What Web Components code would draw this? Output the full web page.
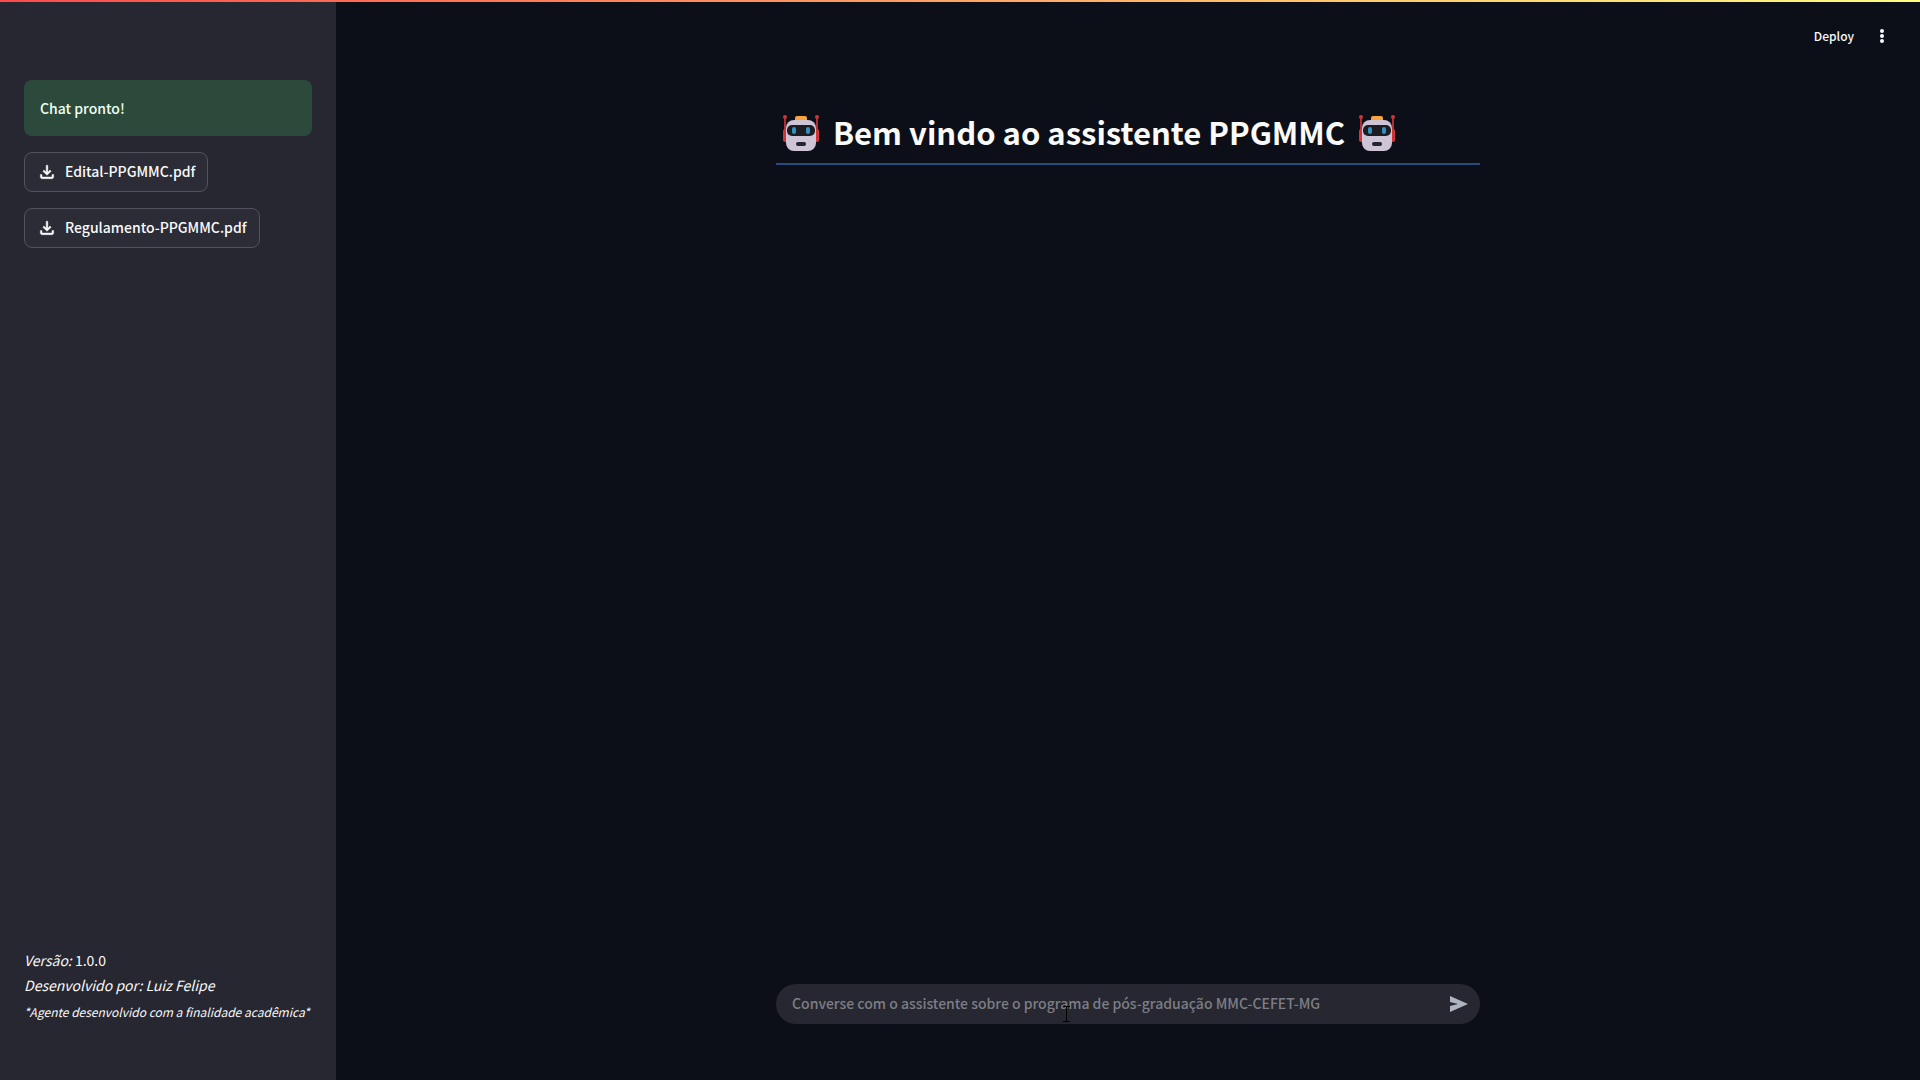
<!DOCTYPE html>
<html lang="pt-BR">
<head>
<meta charset="utf-8">
<title>Assistente PPGMMC</title>
<style>
    body {
        margin: 0;
        background: #0c0f17;
        color: #fafafa;
        font-family: "Noto Sans CJK JP", "Noto Sans", sans-serif;
        font-size: 14px;
        font-weight: 500;
        line-height: 24px;
    }
</style>
</head>
<body>
<chat-app>
    <app-sidebar slot="sidebar">
        <status-alert>Chat pronto!</status-alert>
        <download-button>Edital-PPGMMC.pdf</download-button>
        <download-button>Regulamento-PPGMMC.pdf</download-button>
        <version-info slot="footer" version="1.0.0" author="Luiz Felipe"></version-info>
    </app-sidebar>
    <app-toolbar></app-toolbar>
    <page-title>Bem vindo ao assistente PPGMMC</page-title>
    <chat-input slot="bottom" placeholder="Converse com o assistente sobre o programa de pós-graduação MMC-CEFET-MG"></chat-input>
</chat-app>

<script>
// Attach an open shadow root filled from a template
function render(host, html) {
    const template = document.createElement('template');
    template.innerHTML = html;
    host.attachShadow({ mode: 'open' });
    host.shadowRoot.appendChild(template.content.cloneNode(true));
}

class ChatApp extends HTMLElement {
    constructor() {
        super();
        render(this, `
            <style>
                :host {
                    display: grid;
                    grid-template-columns: 336px 1fr;
                    min-height: 100vh;
                    position: relative;
                }

                .decoration {
                    position: absolute;
                    top: 0;
                    left: 0;
                    right: 0;
                    height: 2px;
                    background: linear-gradient(90deg, #ff4b4b, #fffd80);
                }

                main {
                    display: flex;
                    flex-direction: column;
                }

                .bottom {
                    margin-top: auto;
                    padding: 0 16px 56px;
                }
            </style>
            <slot name="sidebar"></slot>
            <main>
                <slot></slot>
                <div class="bottom"><slot name="bottom"></slot></div>
            </main>
            <div class="decoration"></div>
        `);
    }
}

class AppSidebar extends HTMLElement {
    constructor() {
        super();
        render(this, `
            <style>
                :host {
                    display: flex;
                    flex-direction: column;
                    box-sizing: border-box;
                    padding: 80px 24px 56px;
                    background: #262730;
                }

                .content {
                    display: flex;
                    flex-direction: column;
                    align-items: flex-start;
                    gap: 16px;
                }

                footer {
                    margin-top: auto;
                }
            </style>
            <div class="content"><slot></slot></div>
            <footer><slot name="footer"></slot></footer>
        `);
    }
}

class StatusAlert extends HTMLElement {
    constructor() {
        super();
        render(this, `
            <style>
                :host {
                    display: block;
                    align-self: stretch;
                    padding: 16px;
                    border-radius: 8px;
                    background: #2c4a3c;
                    color: #f0fff0;
                }
            </style>
            <div role="alert"><slot></slot></div>
        `);
    }
}

class DownloadButton extends HTMLElement {
    constructor() {
        super();
        render(this, `
            <style>
                :host {
                    display: block;
                }

                button {
                    display: flex;
                    align-items: center;
                    gap: 8px;
                    height: 40px;
                    padding: 0 12px;
                    border: 1px solid #51525c;
                    border-radius: 8px;
                    background: #2b2c36;
                    color: inherit;
                    font: inherit;
                    cursor: pointer;
                }

                svg {
                    width: 20px;
                    height: 20px;
                    fill: currentColor;
                }

                span {
                    padding-bottom: 2px;
                }
            </style>
            <button type="button">
                <svg viewBox="0 0 24 24" aria-hidden="true"><path d="M12 16l-5-5 1.4-1.45L11 12.15V4h2v8.150l2.6-2.6L17 11zM6 20q-.82 0-1.41-.59Q4 18.820 4 18v-3h2v3h12v-3h2v3q0 .82-.59 1.410Q18.820 20 18 20z" stroke="currentColor" stroke-width=".5"/></svg>
                <span><slot></slot></span>
            </button>
        `);
    }
}

class VersionInfo extends HTMLElement {
    constructor() {
        super();
        render(this, `
            <style>
                :host {
                    display: block;
                    font-weight: 400;
                    line-height: 25px;
                }

                p {
                    margin: 0;
                }

                small {
                    display: block;
                    padding-top: 2px;
                    font-size: 12px;
                    font-style: italic;
                    line-height: 24px;
                    white-space: nowrap;
                }
            </style>
            <p><em>Versão:</em> <span class="version"></span></p>
            <p><em>Desenvolvido por: <span class="author"></span></em></p>
            <small>*Agente desenvolvido com a finalidade acadêmica*</small>
        `);
    }

    connectedCallback() {
        this.shadowRoot.querySelector('.version').textContent = this.getAttribute('version');
        this.shadowRoot.querySelector('.author').textContent = this.getAttribute('author');
    }
}

class AppToolbar extends HTMLElement {
    constructor() {
        super();
        render(this, `
            <style>
                :host {
                    display: flex;
                    align-items: center;
                    justify-content: flex-end;
                    gap: 18px;
                    height: 72px;
                    padding: 0 28px;
                }

                button {
                    display: flex;
                    padding: 0;
                    border: 0;
                    background: none;
                    color: inherit;
                    font: inherit;
                    font-size: 12px;
                    cursor: pointer;
                }

                svg {
                    width: 20px;
                    height: 20px;
                    fill: currentColor;
                }
            </style>
            <button type="button">Deploy</button>
            <button type="button" aria-label="Menu">
                <svg viewBox="0 0 20 20"><circle cx="10" cy="5" r="2"/><circle cx="10" cy="10" r="2"/><circle cx="10" cy="15" r="2"/></svg>
            </button>
        `);
    }
}

class RobotIcon extends HTMLElement {
    constructor() {
        super();
        render(this, `
            <style>
                :host {
                    display: inline-block;
                    flex: none;
                    width: 36px;
                    height: 36px;
                }

                svg {
                    display: block;
                }
            </style>
            <svg width="36" height="36" viewBox="0 0 36 36" aria-hidden="true">
                <g fill="#d13438">
                    <circle cx="2" cy="2" r="2"/>
                    <circle cx="34" cy="2" r="2"/>
                    <rect x="1" y="2" width="2" height="16" opacity=".85"/>
                    <rect x="33" y="2" width="2" height="16" opacity=".85"/>
                    <rect x="0" y="14" width="6" height="13" rx="2"/>
                    <rect x="30" y="14" width="6" height="13" rx="2"/>
                </g>
                <rect x="12" y="1" width="12" height="6" rx="2" fill="#f9a33c"/>
                <rect x="3" y="5" width="30" height="31" rx="8" fill="#cdc4d6"/>
                <rect x="4" y="10" width="28" height="11" rx="5" fill="#1c1c22"/>
                <rect x="9" y="12" width="4" height="7" rx="2" fill="#2f91c4"/>
                <rect x="23" y="12" width="4" height="7" rx="2" fill="#2f91c4"/>
                <rect x="13" y="27" width="10" height="4" rx="2" fill="#25232c"/>
            </svg>
        `);
    }
}

class PageTitle extends HTMLElement {
    constructor() {
        super();
        render(this, `
            <style>
                :host {
                    display: block;
                    box-sizing: border-box;
                    width: 100%;
                    max-width: 704px;
                    margin: 36px auto 0;
                    border-bottom: 2px solid #274b80;
                }

                h1 {
                    display: flex;
                    align-items: center;
                    gap: 14px;
                    margin: 0;
                    padding: 0 7px 7px;
                    font-size: 31px;
                    font-weight: 700;
                    line-height: 48px;
                }

                robot-icon {
                    padding-top: 2px;
                }
            </style>
            <h1>
                <robot-icon></robot-icon>
                <span><slot></slot></span>
                <robot-icon></robot-icon>
            </h1>
        `);
    }
}

class ChatInput extends HTMLElement {
    constructor() {
        super();
        render(this, `
            <style>
                :host {
                    display: block;
                    max-width: 704px;
                    margin: 0 auto;
                }

                form {
                    display: flex;
                    align-items: center;
                    position: relative;
                    height: 40px;
                    padding: 0 11px 0 16px;
                    border-radius: 20px;
                    background: #262730;
                }

                input {
                    flex: 1;
                    min-width: 0;
                    padding: 0 0 2px;
                    border: 0;
                    outline: 0;
                    background: none;
                    color: inherit;
                    font: inherit;
                }

                input::placeholder {
                    color: #7d7e85;
                }

                button {
                    display: flex;
                    padding: 0;
                    border: 0;
                    background: none;
                    color: #b0b3c0;
                }

                /* text pointer resting over the field */
                .pointer {
                    position: absolute;
                    left: 287px;
                    top: 22px;
                }
            </style>
            <form>
                <input type="text">
                <button type="button" aria-label="Enviar">
                    <svg width="20" height="20" viewBox="0 0 20 20" fill="currentColor"><path d="M1 2L19 10L1 18V12L9 10L1 8Z"/></svg>
                </button>
                <svg class="pointer" width="7" height="16" viewBox="0 0 7 16" stroke="#000" fill="none" aria-hidden="true"><path d="M0 .5H7M3.500 0V16M0 15.500H7"/></svg>
            </form>
        `);
    }

    connectedCallback() {
        const input = this.shadowRoot.querySelector('input');
        const placeholder = this.getAttribute('placeholder');
        input.placeholder = placeholder;
        input.setAttribute('aria-label', placeholder);
    }
}

// Define the custom elements
customElements.define('robot-icon', RobotIcon);
customElements.define('chat-app', ChatApp);
customElements.define('app-sidebar', AppSidebar);
customElements.define('status-alert', StatusAlert);
customElements.define('download-button', DownloadButton);
customElements.define('version-info', VersionInfo);
customElements.define('app-toolbar', AppToolbar);
customElements.define('page-title', PageTitle);
customElements.define('chat-input', ChatInput);
</script>
</body>
</html>
